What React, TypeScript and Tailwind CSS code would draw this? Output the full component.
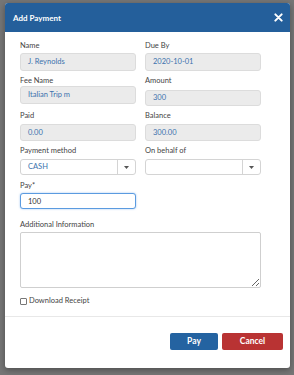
import { useState } from "react";

const FONT = "font-['Lato','Noto_Sans',sans-serif]";

function Label({ children, className = "" }: { children: React.ReactNode; className?: string }) {
  return <div className={`h-[11px] text-[7.5px] leading-[11px] text-[#444] ${className}`}>{children}</div>;
}

function ReadOnly({ value, className = "" }: { value: string; className?: string }) {
  return (
    <div
      className={`flex items-center rounded-[3px] border border-[#dcdcdc] bg-[#ebebeb] pl-[7px] text-[7.5px] text-[#3b72ad] ${className}`}
    >
      {value}
    </div>
  );
}

function Select({ value }: { value: string }) {
  return (
    <div className="flex h-[16px] items-stretch rounded-[3px] border border-[#d4d4d4] bg-white text-[7.5px] text-[#3b72ad]">
      <div className="flex flex-1 items-center pl-[7px]">{value}</div>
      <div className="flex w-[18px] items-center justify-center border-l border-[#d4d4d4]">
        <svg width="5" height="3" viewBox="0 0 5 3">
          <path d="M0 0h5L2.5 3z" fill="#555" />
        </svg>
      </div>
    </div>
  );
}

export default function App() {
  const [pay, setPay] = useState("100");
  const [download, setDownload] = useState(false);

  return (
    <div className={`min-h-[375px] w-[294px] bg-[#767676] pt-[3px] pl-[5px] ${FONT}`}>
      <div className="flex h-[365px] w-[285px] flex-col overflow-hidden rounded-[3px] bg-white shadow-[0_2px_6px_rgba(0,0,0,0.35)]">
        <div className="flex h-[29px] items-center justify-between bg-[#245f9b] pl-[8px] pr-[7px] text-white">
          <span className="text-[8px] font-bold">Add Payment</span>
          <svg width="9" height="9" viewBox="0 0 10 10">
            <path d="M1.5 1.5l7 7M8.5 1.5l-7 7" stroke="white" strokeWidth="2.2" strokeLinecap="round" />
          </svg>
        </div>

        <div className="flex flex-col px-[15px] pt-[8px]">
          <div className="grid grid-cols-[116px_116px] gap-x-[9px]">
            <div>
              <Label>Name</Label>
              <ReadOnly value="J. Reynolds" className="mt-[2px] h-[18px]" />
            </div>
            <div>
              <Label>Due By</Label>
              <ReadOnly value="2020-10-01" className="mt-[2px] h-[18px]" />
            </div>
          </div>

          <div className="mt-[4px] grid grid-cols-[116px_116px] gap-x-[9px]">
            <div>
              <Label>Fee Name</Label>
              <ReadOnly value="Italian Trip m" className="mt-[0px] h-[18px]" />
            </div>
            <div>
              <Label>Amount</Label>
              <ReadOnly value="300" className="mt-[4px] h-[16px]" />
            </div>
          </div>

          <div className="mt-[4px] grid grid-cols-[116px_116px] gap-x-[9px]">
            <div>
              <Label>Paid</Label>
              <ReadOnly value="0.00" className="mt-[3px] h-[17px]" />
            </div>
            <div>
              <Label>Balance</Label>
              <ReadOnly value="300.00" className="mt-[3px] h-[17px]" />
            </div>
          </div>

          <div className="mt-[4px] grid grid-cols-[116px_116px] gap-x-[9px]">
            <div>
              <Label>Payment method</Label>
              <div className="mt-[3px]">
                <Select value="CASH" />
              </div>
            </div>
            <div>
              <Label>On behalf of</Label>
              <div className="mt-[3px]">
                <Select value="" />
              </div>
            </div>
          </div>

          <div className="mt-[5px] w-[116px]">
            <Label>Pay*</Label>
            <input
              value={pay}
              onChange={(e) => setPay(e.target.value)}
              className="mt-[2px] block h-[16px] w-full rounded-[3px] border border-[#5b9be0] bg-white pl-[7px] text-[7.5px] text-[#333] shadow-[0_0_2px_rgba(80,150,230,0.6)] outline-none"
            />
          </div>

          <Label className="mt-[10px]">Additional Information</Label>
          <textarea className="mt-[2px] block h-[56px] w-[241px] resize rounded-[2px] border border-[#cfcfcf] bg-white outline-none" />

          <label
            className="mt-[8px] flex h-[10px] cursor-pointer items-center gap-[2px] text-[7.5px] text-[#444]"
            onClick={() => setDownload(!download)}
          >
            <span
              className={`block h-[7px] w-[7px] rounded-[1px] border border-[#777] ${download ? "bg-[#2463a1]" : "bg-white"}`}
            />
            <span className="text-[#444]">Download Receipt</span>
          </label>
        </div>

        <div className="mt-[10px] border-t border-[#e8e8e8]" />

        <div className="flex justify-end gap-[4px] pt-[16px] pr-[7px]">
          <button className="h-[17px] w-[48px] rounded-[2px] bg-[#2463a1] text-[8.5px] font-bold text-white">Pay</button>
          <button className="h-[17px] w-[61px] rounded-[2px] bg-[#b93333] text-[8.5px] font-bold text-white">Cancel</button>
        </div>
      </div>
    </div>
  );
}
